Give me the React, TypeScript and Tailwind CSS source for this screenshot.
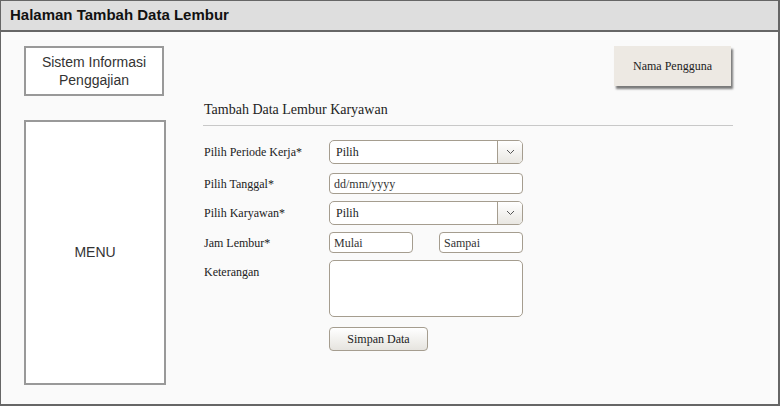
import React from 'react';

const serif = { fontFamily: '"Liberation Serif", "Times New Roman", serif' };

function Chevron() {
  return (
    <svg width="9" height="6" viewBox="0 0 9 6" fill="none">
      <path d="M1 1l3.5 3.5L8 1" stroke="#555" strokeWidth="1" />
    </svg>
  );
}

function SelectBox({ value }: { value: string }) {
  return (
    <div className="flex h-[24px] w-[194px] rounded-[5px] border border-[#a59d8f] bg-white overflow-hidden">
      <div className="flex-1 flex items-center pl-[6px] text-[12px] text-[#222]">{value}</div>
      <div className="w-[25px] flex items-center justify-center border-l border-[#a59d8f] bg-gradient-to-b from-white to-[#e9e7e2]">
        <Chevron />
      </div>
    </div>
  );
}

function TextBox({ placeholder, width }: { placeholder?: string; width: string }) {
  return (
    <div className={`flex items-center h-[21px] ${width} rounded-[4px] border border-[#a59d8f] bg-white pl-[4px] text-[12px] text-[#333]`}>
      {placeholder}
    </div>
  );
}

function Row({ label, children, className = '' }: { label: string; children: React.ReactNode; className?: string }) {
  return (
    <div className={`flex items-center ${className}`}>
      <div className="w-[126px] pl-[1px] text-[12px] text-[#222]">{label}</div>
      {children}
    </div>
  );
}

export default function App() {
  return (
    <div className="w-[780px] h-[406px] flex flex-col border-t border-l border-r-2 border-b-2 border-[#666] bg-[#fafafa]" style={{ fontFamily: '"Liberation Sans", Arial, sans-serif' }}>
      <div className="h-[31px] shrink-0 flex items-center pl-[9px] bg-[#dedede] border-b-2 border-[#666]">
        <span className="text-[15px] font-bold text-[#111]">Halaman Tambah Data Lembur</span>
      </div>

      <div className="flex flex-1 pt-[14px]">
        <div className="ml-[23px] w-[142px] flex flex-col">
          <div className="h-[50px] w-[140px] border-2 border-[#999] bg-white flex items-center justify-center text-center text-[14px] leading-[18px] text-[#333]">
            Sistem Informasi
            <br />
            Penggajian
          </div>
          <div className="mt-[24px] h-[265px] w-[142px] border-2 border-[#999] bg-white flex items-center justify-center text-[14px] text-[#333]">
            MENU
          </div>
        </div>

        <div className="ml-[37px] w-[530px] flex flex-col" style={serif}>
          <div className="flex justify-end">
            <div className="h-[40px] w-[117px] mr-[2px] bg-[#ede9e3] shadow-[2px_3px_2px_#7a7a7a] flex items-center justify-center text-[12px] text-[#222]">
              Nama Pengguna
            </div>
          </div>

          <div className="mt-[15px] pb-[6px] pl-[1px] border-b border-[#c8c8c8] text-[14px] leading-[18px] text-[#222]">
            Tambah Data Lembur Karyawan
          </div>

          <Row label="Pilih Periode Kerja*" className="mt-[14px]">
            <SelectBox value="Pilih" />
          </Row>
          <Row label="Pilih Tanggal*" className="mt-[9px]">
            <TextBox placeholder="dd/mm/yyyy" width="w-[194px]" />
          </Row>
          <Row label="Pilih Karyawan*" className="mt-[7px]">
            <SelectBox value="Pilih" />
          </Row>
          <Row label="Jam Lembur*" className="mt-[7px]">
            <TextBox placeholder="Mulai" width="w-[84px]" />
            <div className="ml-[26px]">
              <TextBox placeholder="Sampai" width="w-[84px]" />
            </div>
          </Row>
          <div className="flex mt-[7px]">
            <div className="w-[126px] pl-[1px] pt-[3px] text-[12px] text-[#222]">Keterangan</div>
            <div className="h-[57px] w-[194px] rounded-[5px] border border-[#a59d8f] bg-white" />
          </div>
          <div className="flex mt-[10px]">
            <div className="w-[126px]" />
            <div className="h-[24px] w-[99px] rounded-[4px] border border-[#a59d8f] bg-gradient-to-b from-white to-[#e6e4df] flex items-center justify-center text-[12px] text-[#222]">
              Simpan Data
            </div>
          </div>
        </div>
      </div>
    </div>
  );
}
